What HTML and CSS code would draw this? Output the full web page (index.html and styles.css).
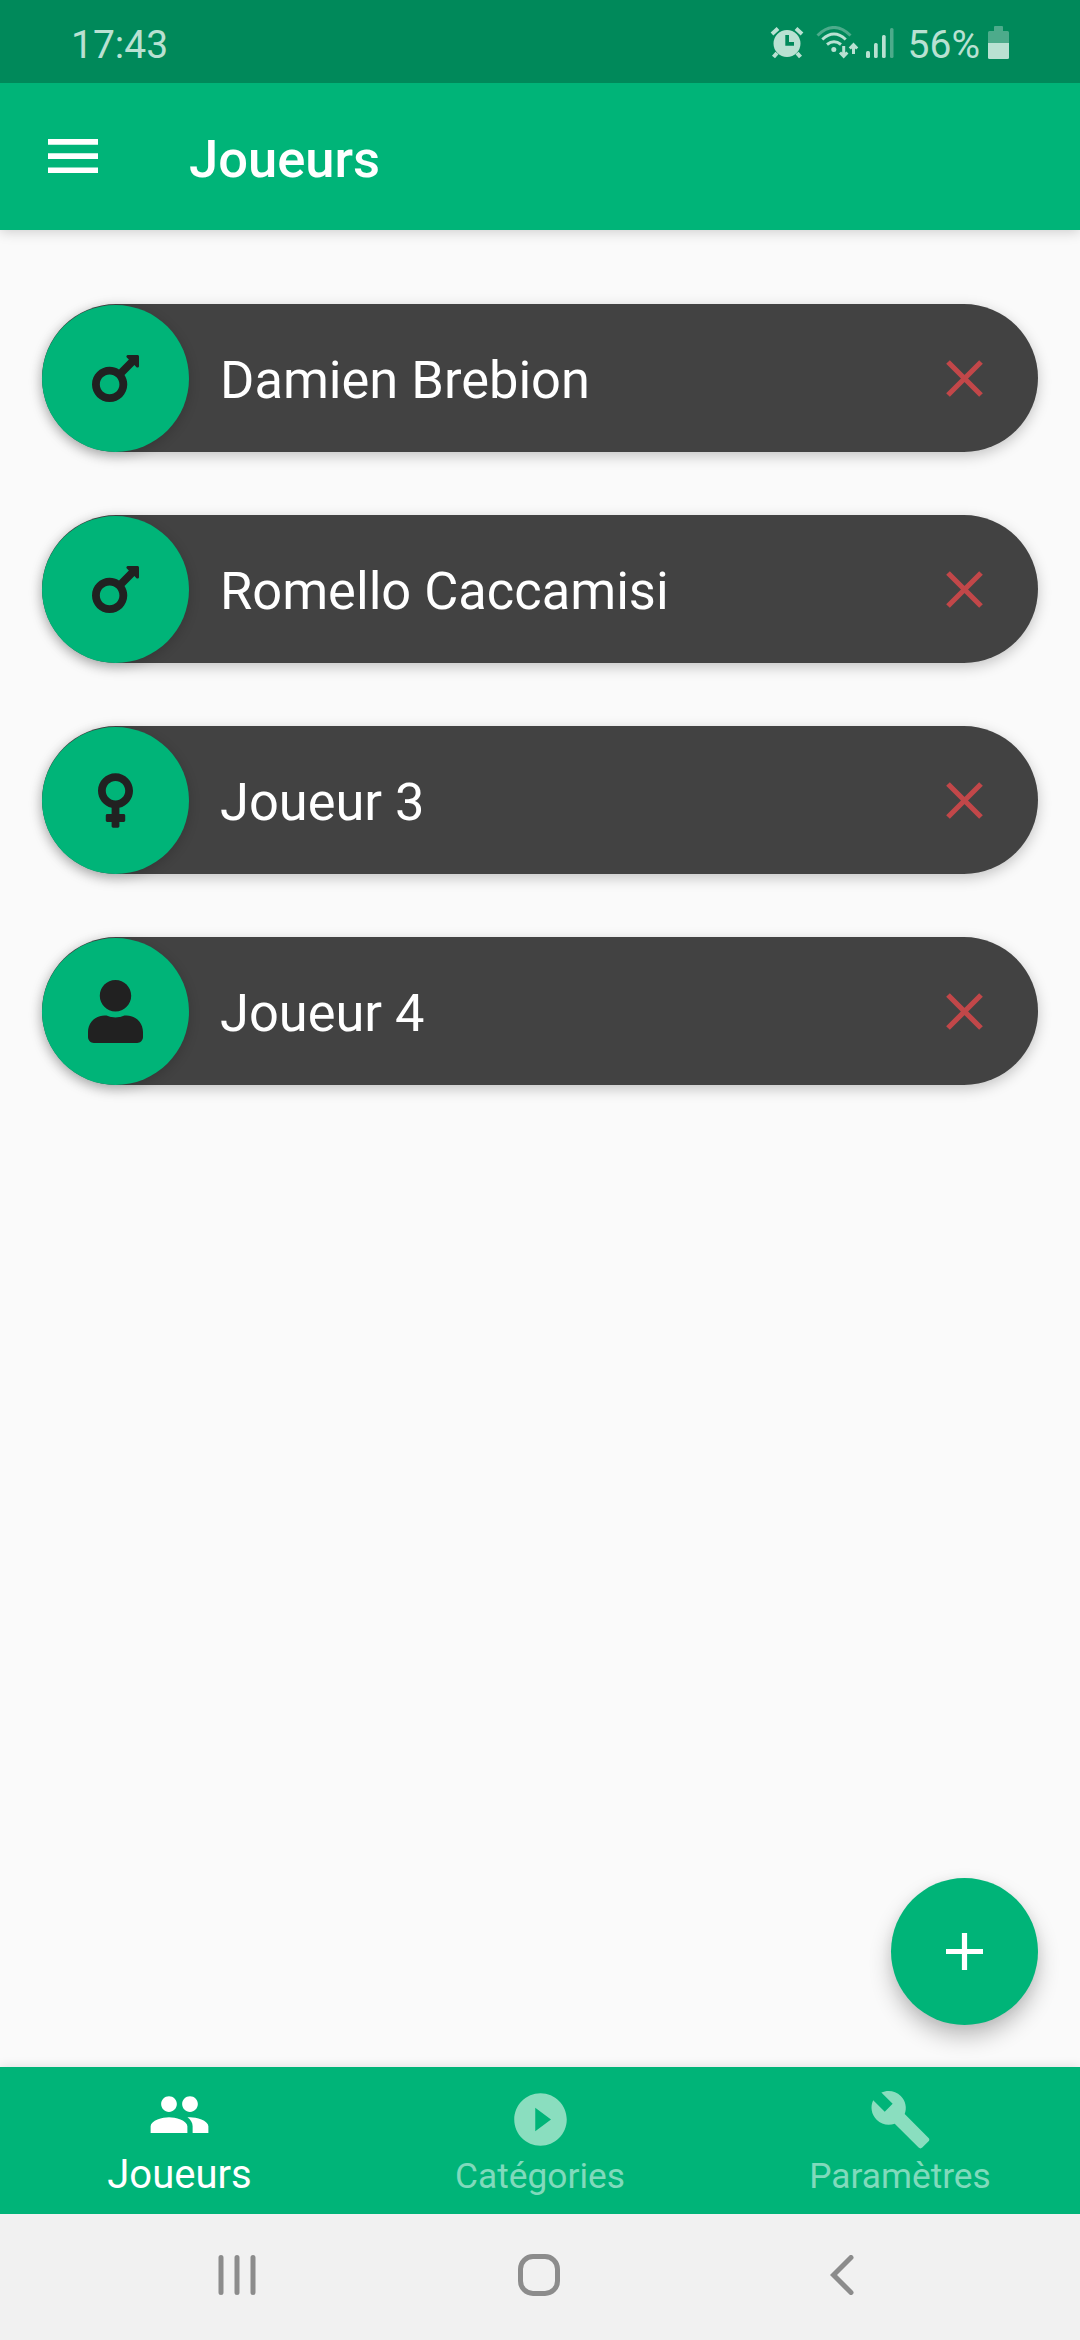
FILE: index.html
```html
<!DOCTYPE html>
<html lang="fr">
<head>
<meta charset="utf-8">
<title>Joueurs</title>
<link rel="stylesheet" href="styles.css">
</head>
<body>
<div class="screen">
  <header class="status-bar">
    <span class="clock">17:43</span>
    <div class="status-icons">
      <svg class="alarm" width="34" height="34" viewBox="0 0 34 34" fill="#b9e1d2">
        <path d="M17 4a13.500 13.500 0 1 0 0 27a13.500 13.500 0 1 0 0-27zM15.300 9H19v7h5v3.800h-8.700z" fill-rule="evenodd"/>
        <path d="M2 8l6-5.500M32 8l-6-5.500M7 27l-3.500 4M27 27l3.500 4" stroke="#b9e1d2" stroke-width="4"/>
      </svg>
      <svg class="wifi" width="44" height="34" viewBox="0 0 44 34" fill="none" stroke="#b9e1d2" stroke-width="3">
        <path d="M1.500 9.500Q18-6.500 34.500 9.500" stroke="#4dab8b"/>
        <path d="M6.300 13.500Q18 2.500 29.700 13.500M11 18.500Q18 13 25 18.500"/>
        <circle cx="17.800" cy="23.500" r="2.500" fill="#b9e1d2" stroke="none"/>
        <path d="M27.700 20v9M24 26.500l3.700 3.800l3.700-3.800M37.500 28v-8.500M33.800 22.500l3.700-3.800l3.700 3.800"/>
      </svg>
      <svg class="signal" width="28" height="31" viewBox="0 0 28 31" fill="#b9e1d2">
        <rect x="0" y="24" width="4" height="7" rx="1.500"/>
        <rect x="8" y="16" width="3.700" height="15" rx="1.500"/>
        <rect x="16" y="8" width="3.700" height="23" rx="1.500"/>
        <rect x="24" y="1" width="3.500" height="30" rx="1.500" fill="#4dab8b"/>
      </svg>
      <span class="percent">56%</span>
      <svg class="battery" width="21" height="33" viewBox="0 0 21 33">
        <path d="M6 1q0-1 1-1h7q1 0 1 1v4h4.500q1.500 0 1.500 1.500V17H0V6.500Q0 5 1.500 5H6z" fill="#4dab8b"/>
        <path d="M0 17h21v14.500q0 1.500-1.500 1.500h-18Q0 33 0 31.500z" fill="#b9e1d2"/>
      </svg>
    </div>
  </header>

  <div class="app-bar">
    <svg class="menu" width="50" height="35" viewBox="0 0 50 35" fill="#fff">
      <path d="M0 0h50v5.700H0zM0 14.200h50v5.700H0zM0 28.400h50v5.700H0z"/>
    </svg>
    <h1 class="title">Joueurs</h1>
  </div>

  <main class="content">
    <ul class="players">
      <li class="player">
        <span class="avatar"><svg width="47" height="63" viewBox="0 0 384 512"><use href="#mars"/></svg></span>
        <span class="name">Damien Brebion</span>
        <svg class="remove" width="37" height="37" viewBox="0 0 37 37"><use href="#cross"/></svg>
      </li>
      <li class="player">
        <span class="avatar"><svg width="47" height="63" viewBox="0 0 384 512"><use href="#mars"/></svg></span>
        <span class="name">Romello Caccamisi</span>
        <svg class="remove" width="37" height="37" viewBox="0 0 37 37"><use href="#cross"/></svg>
      </li>
      <li class="player">
        <span class="avatar"><svg width="35" height="63" viewBox="0 0 288 512"><path d="M288 176c0-79.500-64.500-144-144-144S0 96.500 0 176c0 68.500 47.900 125.900 112 140.400V368H76c-6.600 0-12 5.400-12 12v40c0 6.600 5.400 12 12 12h36v36c0 6.600 5.400 12 12 12h40c6.600 0 12-5.400 12-12v-36h36c6.600 0 12-5.400 12-12v-40c0-6.600-5.400-12-12-12h-36v-51.600c64.100-14.600 112-71.900 112-140.400zm-224 0c0-44.100 35.900-80 80-80s80 35.900 80 80-35.900 80-80 80-80-35.900-80-80z"/></svg></span>
        <span class="name">Joueur 3</span>
        <svg class="remove" width="37" height="37" viewBox="0 0 37 37"><use href="#cross"/></svg>
      </li>
      <li class="player">
        <span class="avatar"><svg width="55" height="63" viewBox="0 0 448 512"><path d="M224 256c70.700 0 128-57.300 128-128S294.700 0 224 0 96 57.300 96 128s57.300 128 128 128zm89.600 32h-16.700c-22.200 10.200-46.900 16-72.900 16s-50.600-5.800-72.900-16h-16.700C60.200 288 0 348.200 0 422.400V464c0 26.500 21.500 48 48 48h352c26.500 0 48-21.500 48-48v-41.600c0-74.200-60.200-134.400-134.400-134.400z"/></svg></span>
        <span class="name">Joueur 4</span>
        <svg class="remove" width="37" height="37" viewBox="0 0 37 37"><use href="#cross"/></svg>
      </li>
    </ul>
    <button class="fab" aria-label="Ajouter">
      <svg width="37" height="37" viewBox="0 0 37 37" fill="#fff"><path d="M15.900 0h5.200v15.900H37v5.200H21.100V37h-5.200V21.100H0v-5.200h15.900z"/></svg>
    </button>
  </main>

  <nav class="tabs">
    <a class="tab active">
      <svg width="63" height="63" viewBox="0 0 24 24"><path d="M16 11c1.660 0 2.990-1.340 2.990-3S17.660 5 16 5c-1.660 0-3 1.340-3 3s1.340 3 3 3zm-8 0c1.660 0 2.990-1.340 2.990-3S9.660 5 8 5C6.340 5 5 6.340 5 8s1.340 3 3 3zm0 2c-2.330 0-7 1.170-7 3.500V19h14v-2.500c0-2.330-4.670-3.500-7-3.500zm8 0c-.290 0-.620.020-.970.050 1.160.840 1.970 1.970 1.970 3.450V19h6v-2.500c0-2.330-4.670-3.500-7-3.500z"/></svg>
      <span>Joueurs</span>
    </a>
    <a class="tab">
      <svg width="63" height="63" viewBox="0 0 24 24"><path d="M12 2C6.480 2 2 6.480 2 12s4.480 10 10 10 10-4.480 10-10S17.520 2 12 2zm-2 14.500v-9l6 4.500-6 4.500z"/></svg>
      <span>Catégories</span>
    </a>
    <a class="tab">
      <svg width="63" height="63" viewBox="0 0 24 24"><path d="M22.700 19l-9.100-9.100c.9-2.300.4-5-1.500-6.900-2-2-5-2.400-7.400-1.300L9 6 6 9 1.600 4.700C.4 7.100.9 10.100 2.900 12.100c1.900 1.900 4.600 2.400 6.900 1.500l9.100 9.100c.4.400 1 .4 1.400 0l2.300-2.300c.5-.4.5-1.100.1-1.400z"/></svg>
      <span>Paramètres</span>
    </a>
  </nav>

  <footer class="system-nav">
    <svg width="38" height="40" viewBox="0 0 38 40"><path d="M3 2.500v35M19 2.500v35M35 2.500v35"/></svg>
    <svg class="home" width="42" height="42" viewBox="0 0 42 42"><rect x="2.500" y="2.500" width="37" height="37" rx="12.500"/></svg>
    <svg width="24" height="40" viewBox="0 0 24 40"><path d="M21 2.500L3.500 20L21 37.500"/></svg>
  </footer>
</div>

<svg class="symbols" width="0" height="0">
  <defs>
    <path id="mars" d="M372 64h-79c-10.700 0-16 12.900-8.500 20.500l16.900 16.900-80.700 80.700C198.500 167.500 172.300 160 144 160 64.500 160 0 224.500 0 304s64.500 144 144 144 144-64.500 144-144c0-28.300-8.200-54.500-22.100-76.700l80.700-80.700 16.900 16.900c7.600 7.600 20.500 2.200 20.500-8.500V76c0-6.600-5.400-12-12-12zM144 384c-44.100 0-80-35.900-80-80s35.900-80 80-80 80 35.900 80 80-35.900 80-80 80z"/>
    <path id="cross" d="M2 2L35 35M35 2L2 35" stroke="#c24749" stroke-width="5.200"/>
  </defs>
</svg>
</body>
</html>
```
FILE: styles.css
```css
* { box-sizing: border-box; }

body {
  margin: 0;
  font-family: Roboto, sans-serif;
  background: #fafafa;
}

svg { display: block; flex: none; }

.symbols { position: absolute; }

.screen {
  width: 1080px;
  height: 2340px;
  display: flex;
  flex-direction: column;
  overflow: hidden;
}

.status-bar {
  height: 83px;
  flex: none;
  display: flex;
  justify-content: space-between;
  padding: 0 71px;
  background: #00895a;
  color: #b9e1d2;
  font-size: 39px;
  line-height: 90px;
}

.status-icons { display: flex; }
.alarm { margin: 26px 12px 0 0; }
.wifi { margin: 26px 6px 0 0; }
.signal { margin: 27px 14px 0 0; }
.percent { margin-right: 8px; }
.battery { margin-top: 26px; }

.app-bar {
  height: 147px;
  flex: none;
  display: flex;
  align-items: center;
  padding-left: 48px;
  background: #00b478;
  box-shadow: 0 2px 12px rgba(0, 0, 0, .18);
  clip-path: inset(0 0 -30px);
  z-index: 1;
}

.title {
  margin: 5px 0 0 91px;
  color: #fff;
  font-size: 52.5px;
  font-weight: 500;
  line-height: 62px;
}

.content {
  flex: 1;
  display: flex;
  flex-direction: column;
  justify-content: space-between;
  padding: 74px 42px 42px;
}

.players {
  margin: 0;
  padding: 0;
  list-style: none;
  display: flex;
  flex-direction: column;
  gap: 63px;
}

.player {
  height: 148px;
  display: flex;
  align-items: center;
  padding-right: 55px;
  border-radius: 74px;
  background: #424242;
  box-shadow: 0 4px 14px rgba(0, 0, 0, .22);
}

.avatar {
  width: 147px;
  height: 147px;
  margin-top: 1px;
  display: grid;
  place-items: center;
  border-radius: 50%;
  background: #00b478;
  fill: #212121;
  box-shadow: 0 3px 12px rgba(0, 0, 0, .18);
}

.name {
  flex: 1;
  margin: 4px 0 0 31px;
  color: #fff;
  font-size: 52.4px;
  line-height: 62px;
}

.fab {
  width: 147px;
  height: 147px;
  align-self: flex-end;
  display: grid;
  place-items: center;
  padding: 0;
  border: 0;
  border-radius: 50%;
  background: #00b478;
  box-shadow: 0 12px 22px rgba(0, 0, 0, .24), 0 2px 12px rgba(0, 0, 0, .06);
}

.tabs {
  height: 147px;
  flex: none;
  display: grid;
  grid-template-columns: repeat(3, 1fr);
  background: #00b478;
  box-shadow: 0 -1px 10px rgba(0, 0, 0, .1);
}

.tab {
  display: flex;
  flex-direction: column;
  align-items: center;
  padding-top: 21px;
  color: #80dabc;
  fill: #8adebf;
  font-size: 35.3px;
  line-height: 46px;
  gap: 2px;
}

.tab.active {
  padding: 16px 1px 0 0;
  color: #fff;
  fill: #fff;
  font-size: 40px;
  line-height: 47px;
  gap: 5px;
}

.system-nav {
  height: 126px;
  flex: none;
  display: flex;
  align-items: center;
  justify-content: space-between;
  padding: 0 226px 4px 218px;
  background: #f1f1f1;
  fill: none;
  stroke: #8c8c8c;
  stroke-width: 5;
  stroke-linecap: round;
}

.home { margin: 0 4px 0 -4px; }
```
